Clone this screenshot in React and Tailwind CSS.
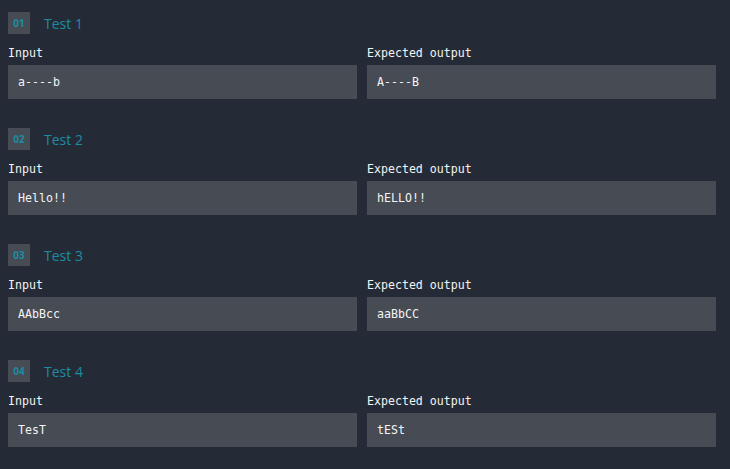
import React from 'react';

const tests = [
  { n: '01', input: 'a----b', output: 'A----B' },
  { n: '02', input: 'Hello!!', output: 'hELLO!!' },
  { n: '03', input: 'AAbBcc', output: 'aaBbCC' },
  { n: '04', input: 'TesT', output: 'tESt' },
];

const mono = { fontFamily: '"DejaVu Sans Mono", monospace' };

const Field = ({ label, value }) => (
  <div className="flex-1 min-w-0">
    <div className="mt-[11px] h-[16px] leading-[16px] text-[11.6px] text-[#f4f4f4]" style={mono}>
      {label}
    </div>
    <div
      className="mt-[4px] h-[34px] bg-[#464b54] pl-[10px] pt-[1px] flex items-center text-[11.6px] text-[#f4f4f4]"
      style={mono}
    >
      {value}
    </div>
  </div>
);

const TestCase = ({ n, input, output }) => (
  <div className="mb-[29px]">
    <div className="flex items-center h-[22px]">
      <div className="w-[22px] h-[22px] bg-[#464b54] flex items-center justify-center text-[10px] font-bold text-[#1d8ca3] font-['Open_Sans',sans-serif]">
        {n}
      </div>
      <span className="ml-[14px] text-[14px] text-[#1d8ca3] font-['Open_Sans',sans-serif]">
        Test {Number(n)}
      </span>
    </div>
    <div className="flex gap-[10px]">
      <Field label="Input" value={input} />
      <Field label="Expected output" value={output} />
    </div>
  </div>
);

export default function App() {
  return (
    <div className="w-[730px] h-[469px] overflow-hidden bg-[#252b36] pt-[12px] pl-[8px] pr-[14px]">
      {tests.map((t) => (
        <TestCase key={t.n} {...t} />
      ))}
    </div>
  );
}
